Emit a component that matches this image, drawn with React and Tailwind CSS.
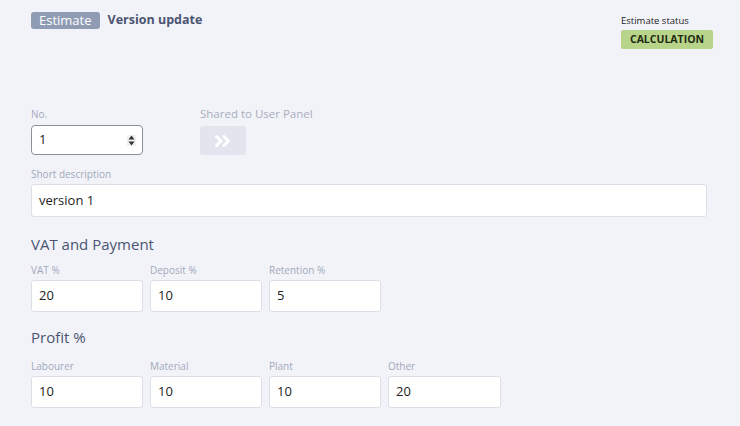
import React from 'react';

const font = { fontFamily: '"Open Sans", "Noto Sans", sans-serif' };

function Field({ label, value, className = 'w-[112px]' }) {
  return (
    <div className={className}>
      <div className="text-[10px] leading-[14px] text-[#a1a9ba] mb-[3px]">{label}</div>
      <div className="h-[32px] bg-white border border-[#dcdfe8] rounded-[3px] flex items-center px-[7px] text-[13px] text-[#222]">
        {value}
      </div>
    </div>
  );
}

export default function App() {
  return (
    <div className="w-[740px] h-[426px] overflow-hidden bg-[#f2f3f9] pl-[31px] pt-[11px]" style={font}>
      <div className="flex justify-between pr-[27px]">
        <div className="flex items-center gap-[8px] h-[18px]">
          <span className="bg-[#8f9cb4] text-white text-[13px] leading-[17px] px-[8px] rounded-[3px]">Estimate</span>
          <span className="text-[12.5px] font-bold text-[#4b5572]">Version update</span>
        </div>
        <div className="pt-[3px]">
          <div className="text-[9.5px] leading-[13px] text-[#222]">Estimate status</div>
          <div className="mt-[3px] w-[92px] h-[19px] bg-[#b7d48a] rounded-[2px] flex items-center justify-center text-[10.5px] font-bold text-[#1f2a12]">
            CALCULATION
          </div>
        </div>
      </div>

      <div className="flex mt-[53px]">
        <div className="w-[112px] pt-[5px]">
          <div className="text-[10px] leading-[14px] text-[#a1a9ba] mb-[4px]">No.</div>
          <div className="h-[30px] bg-white border border-[#8a8f9c] rounded-[4px] flex items-center justify-between pl-[7px] pr-[6px] text-[13px] text-[#222]">
            <span>1</span>
            <span className="flex flex-col items-center bg-[#f0f0f2] px-[1px]">
              <svg width="7" height="5" viewBox="0 0 7 5"><path d="M3.5 0.5 L6.5 4.5 L0.5 4.5 Z" fill="#333" /></svg>
              <svg width="7" height="5" viewBox="0 0 7 5" className="mt-[1px]"><path d="M0.5 0.5 L6.5 0.5 L3.5 4.5 Z" fill="#333" /></svg>
            </span>
          </div>
        </div>
        <div className="ml-[57px] pt-[4px]">
          <div className="text-[11.5px] leading-[16px] text-[#a7aebd]">Shared to User Panel</div>
          <div className="mt-[4px] w-[46px] h-[29px] bg-[#e2e5ee] rounded-[3px] flex items-center justify-center">
            <svg width="18" height="12" viewBox="0 0 18 12" fill="none" stroke="white" strokeWidth="3" strokeLinecap="round" strokeLinejoin="round">
              <path d="M2.5 1.5 L7 6 L2.5 10.5" />
              <path d="M10 1.5 L14.5 6 L10 10.5" />
            </svg>
          </div>
        </div>
      </div>

      <div className="mt-[12px] w-[676px]">
        <div className="text-[10px] leading-[14px] text-[#a1a9ba] mb-[3px]">Short description</div>
        <div className="h-[33px] bg-white border border-[#dcdfe8] rounded-[3px] flex items-center px-[7px] text-[13px] text-[#222]">
          version 1
        </div>
      </div>

      <div className="mt-[17px] text-[15px] leading-[20px] text-[#4b5572]">VAT and Payment</div>
      <div className="flex gap-[7px] mt-[9px]">
        <Field label="VAT %" value="20" />
        <Field label="Deposit %" value="10" />
        <Field label="Retention %" value="5" />
      </div>

      <div className="mt-[15px] text-[15px] leading-[20px] text-[#4b5572]">Profit %</div>
      <div className="flex gap-[7px] mt-[12px]">
        <Field label="Labourer" value="10" />
        <Field label="Material" value="10" />
        <Field label="Plant" value="10" />
        <Field label="Other" value="20" className="w-[113px]" />
      </div>
    </div>
  );
}
